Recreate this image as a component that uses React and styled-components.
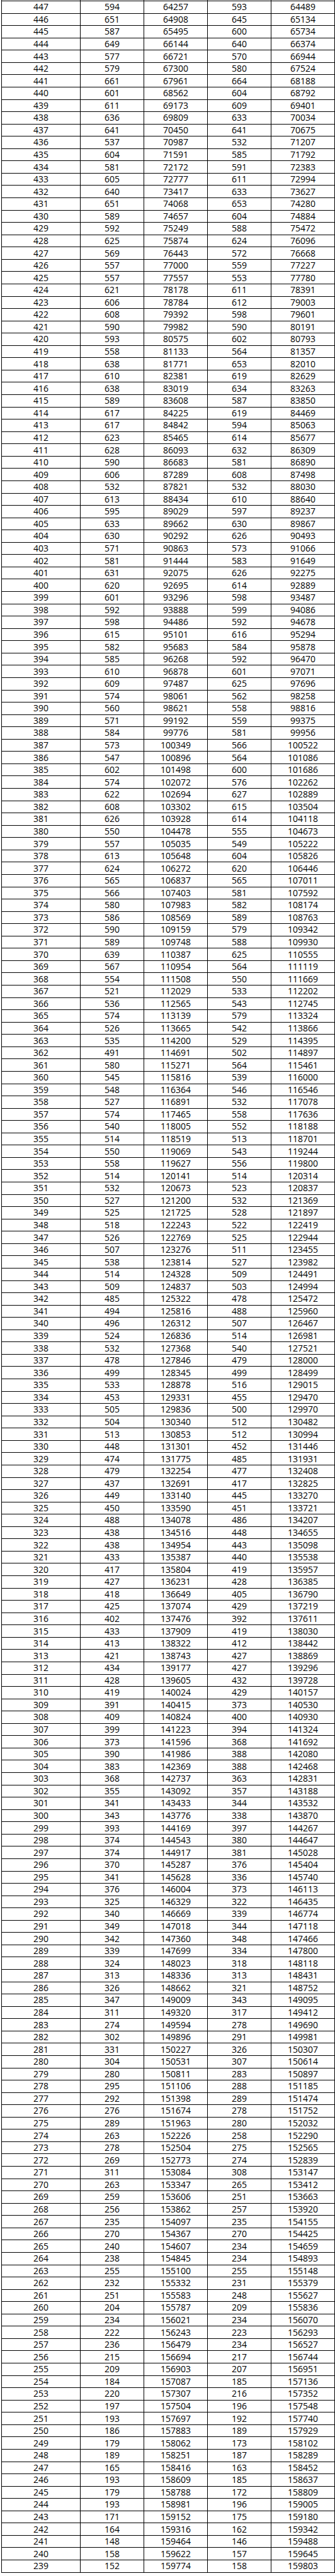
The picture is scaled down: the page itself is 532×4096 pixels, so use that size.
import React from "react";
import styled, { createGlobalStyle } from "styled-components";

const RAW = `447 594 64257 593 64489;446 651 64908 645 65134;445 587 65495 600 65734;444 649 66144 640 66374;443 577 66721 570 66944;442 579 67300 580 67524;441 661 67961 664 68188;440 601 68562 604 68792;439 611 69173 609 69401;438 636 69809 633 70034;437 641 70450 641 70675;436 537 70987 532 71207;435 604 71591 585 71792;434 581 72172 591 72383;433 605 72777 611 72994;432 640 73417 633 73627;431 651 74068 653 74280;430 589 74657 604 74884;429 592 75249 588 75472;428 625 75874 624 76096;427 569 76443 572 76668;426 557 77000 559 77227;425 557 77557 553 77780;424 621 78178 611 78391;423 606 78784 612 79003;422 608 79392 598 79601;421 590 79982 590 80191;420 593 80575 602 80793;419 558 81133 564 81357;418 638 81771 653 82010;417 610 82381 619 82629;416 638 83019 634 83263;415 589 83608 587 83850;414 617 84225 619 84469;413 617 84842 594 85063;412 623 85465 614 85677;411 628 86093 632 86309;410 590 86683 581 86890;409 606 87289 608 87498;408 532 87821 532 88030;407 613 88434 610 88640;406 595 89029 597 89237;405 633 89662 630 89867;404 630 90292 626 90493;403 571 90863 573 91066;402 581 91444 583 91649;401 631 92075 626 92275;400 620 92695 614 92889;399 601 93296 598 93487;398 592 93888 599 94086;397 598 94486 592 94678;396 615 95101 616 95294;395 582 95683 584 95878;394 585 96268 592 96470;393 610 96878 601 97071;392 609 97487 625 97696;391 574 98061 562 98258;390 560 98621 558 98816;389 571 99192 559 99375;388 584 99776 581 99956;387 573 100349 566 100522;386 547 100896 564 101086;385 602 101498 600 101686;384 574 102072 576 102262;383 622 102694 627 102889;382 608 103302 615 103504;381 626 103928 614 104118;380 550 104478 555 104673;379 557 105035 549 105222;378 613 105648 604 105826;377 624 106272 620 106446;376 565 106837 565 107011;375 566 107403 581 107592;374 580 107983 582 108174;373 586 108569 589 108763;372 590 109159 579 109342;371 589 109748 588 109930;370 639 110387 625 110555;369 567 110954 564 111119;368 554 111508 550 111669;367 521 112029 533 112202;366 536 112565 543 112745;365 574 113139 579 113324;364 526 113665 542 113866;363 535 114200 529 114395;362 491 114691 502 114897;361 580 115271 564 115461;360 545 115816 539 116000;359 548 116364 546 116546;358 527 116891 532 117078;357 574 117465 558 117636;356 540 118005 552 118188;355 514 118519 513 118701;354 550 119069 543 119244;353 558 119627 556 119800;352 514 120141 514 120314;351 532 120673 523 120837;350 527 121200 532 121369;349 525 121725 528 121897;348 518 122243 522 122419;347 526 122769 525 122944;346 507 123276 511 123455;345 538 123814 527 123982;344 514 124328 509 124491;343 509 124837 503 124994;342 485 125322 478 125472;341 494 125816 488 125960;340 496 126312 507 126467;339 524 126836 514 126981;338 532 127368 540 127521;337 478 127846 479 128000;336 499 128345 499 128499;335 533 128878 516 129015;334 453 129331 455 129470;333 505 129836 500 129970;332 504 130340 512 130482;331 513 130853 512 130994;330 448 131301 452 131446;329 474 131775 485 131931;328 479 132254 477 132408;327 437 132691 417 132825;326 449 133140 445 133270;325 450 133590 451 133721;324 488 134078 486 134207;323 438 134516 448 134655;322 438 134954 443 135098;321 433 135387 440 135538;320 417 135804 419 135957;319 427 136231 428 136385;318 418 136649 405 136790;317 425 137074 429 137219;316 402 137476 392 137611;315 433 137909 419 138030;314 413 138322 412 138442;313 421 138743 427 138869;312 434 139177 427 139296;311 428 139605 432 139728;310 419 140024 429 140157;309 391 140415 373 140530;308 409 140824 400 140930;307 399 141223 394 141324;306 373 141596 368 141692;305 390 141986 388 142080;304 383 142369 388 142468;303 368 142737 363 142831;302 355 143092 357 143188;301 341 143433 344 143532;300 343 143776 338 143870;299 393 144169 397 144267;298 374 144543 380 144647;297 374 144917 381 145028;296 370 145287 376 145404;295 341 145628 336 145740;294 376 146004 373 146113;293 325 146329 322 146435;292 340 146669 339 146774;291 349 147018 344 147118;290 342 147360 348 147466;289 339 147699 334 147800;288 324 148023 318 148118;287 313 148336 313 148431;286 326 148662 321 148752;285 347 149009 343 149095;284 311 149320 317 149412;283 274 149594 278 149690;282 302 149896 291 149981;281 331 150227 326 150307;280 304 150531 307 150614;279 280 150811 283 150897;278 295 151106 288 151185;277 292 151398 289 151474;276 276 151674 278 151752;275 289 151963 280 152032;274 263 152226 258 152290;273 278 152504 275 152565;272 269 152773 274 152839;271 311 153084 308 153147;270 263 153347 265 153412;269 259 153606 251 153663;268 256 153862 257 153920;267 235 154097 235 154155;266 270 154367 270 154425;265 240 154607 234 154659;264 238 154845 234 154893;263 255 155100 255 155148;262 232 155332 231 155379;261 251 155583 248 155627;260 204 155787 209 155836;259 234 156021 234 156070;258 222 156243 223 156293;257 236 156479 234 156527;256 215 156694 217 156744;255 209 156903 207 156951;254 184 157087 185 157136;253 220 157307 216 157352;252 197 157504 196 157548;251 193 157697 192 157740;250 186 157883 189 157929;249 179 158062 173 158102;248 189 158251 187 158289;247 165 158416 163 158452;246 193 158609 185 158637;245 179 158788 172 158809;244 193 158981 196 159005;243 171 159152 175 159180;242 164 159316 162 159342;241 148 159464 146 159488;240 158 159622 157 159645;239 152 159774 158 159803`;

const rows = RAW.split(";").map((r) => r.trim().split(" "));

const GlobalStyle = createGlobalStyle`
  html, body {
    margin: 0;
    padding: 0;
    background: #ffffff;
  }
  body {
    font-family: "Open Sans", "Noto Sans CJK SC", sans-serif;
  }
`;

const Table = styled.div`
  margin-left: 2px;
  width: 530px;
  border-left: 1px solid #000;
  color: #000;
`;

const Row = styled.div`
  display: grid;
  grid-template-columns: 125px repeat(4, 101px);
  height: ${(p) => (p.$stub ? "2px" : "19.57px")};
  box-sizing: border-box;
  border-bottom: 1px solid #000;
`;

const Cell = styled.div`
  border-right: 1px solid #000;
  display: flex;
  align-items: center;
  justify-content: center;
  font-size: 14px;
  line-height: 1;
  white-space: nowrap;
  overflow: hidden;
`;

export default function App() {
  return (
    <>
      <GlobalStyle />
      <Table>
        <Row $stub>
          {[0, 1, 2, 3, 4].map((i) => (
            <Cell key={i} />
          ))}
        </Row>
        {rows.map((r) => (
          <Row key={r[0]}>
            {r.map((v, i) => (
              <Cell key={i}>{v}</Cell>
            ))}
          </Row>
        ))}
      </Table>
    </>
  );
}
